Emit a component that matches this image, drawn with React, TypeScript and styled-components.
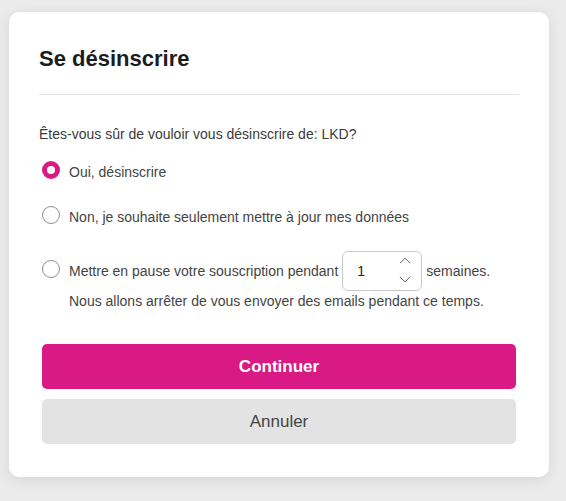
import React, { useState } from "react";
import styled, { createGlobalStyle } from "styled-components";
import { ChevronUp, ChevronDown } from "lucide-react";

const GlobalStyle = createGlobalStyle`
  html, body {
    margin: 0;
    padding: 0;
    background: #ebebeb;
    font-family: "Liberation Sans", Arial, sans-serif;
  }
`;

const Page = styled.div`
  padding: 12px 17px 24px 9px;
`;

const Card = styled.div`
  width: 540px;
  box-sizing: border-box;
  background: #ffffff;
  border-radius: 10px;
  box-shadow: 0 3px 14px rgba(0, 0, 0, 0.09);
  padding: 34px 30px 33px;
`;

const Title = styled.h2`
  margin: 0;
  font-size: 22px;
  font-weight: 700;
  color: #1c1c1c;
`;

const Divider = styled.hr`
  margin: 22px 0 0;
  border: none;
  border-top: 1px solid #e2e2e2;
`;

const Question = styled.p`
  margin: 29px 0 0;
  font-size: 14px;
  line-height: 20px;
  color: #3a3a3a;
`;

const Options = styled.div`
  display: flex;
  flex-direction: column;
  gap: 24px;
  margin: 17px 3px 0;
`;

const Option = styled.label`
  display: flex;
  align-items: flex-start;
  gap: 9px;
  cursor: pointer;
`;

const Radio = styled.span<{ $checked: boolean; $offset?: number }>`
  flex: none;
  box-sizing: border-box;
  width: 18px;
  height: 18px;
  border-radius: 50%;
  margin-top: ${({ $offset }) => $offset ?? 0}px;
  border: ${({ $checked }) => ($checked ? "5px solid #d91a84" : "1px solid #8f8f8f")};
  background: #ffffff;
`;

const Label = styled.span<{ $tight?: boolean }>`
  font-size: 14px;
  line-height: 20px;
  color: #444444;
  padding-top: ${({ $tight }) => ($tight ? 0 : 1)}px;
`;

const PauseBody = styled.div`
  display: flex;
  flex-direction: column;
`;

const PauseLine = styled.div`
  display: flex;
  align-items: center;
  gap: 4px;
  font-size: 14px;
  color: #444444;
`;

const NumberBox = styled.div`
  position: relative;
  width: 80px;
  height: 40px;
  box-sizing: border-box;
  border: 1px solid #c9c9c9;
  border-radius: 6px;
  display: flex;
  align-items: center;
  padding-left: 14px;
  font-size: 14px;
  color: #222222;
`;

const Spinner = styled.div`
  position: absolute;
  right: 6px;
  top: -1px;
  bottom: 1px;
  display: flex;
  flex-direction: column;
  justify-content: space-between;
  color: #5f5f5f;
`;

const Buttons = styled.div`
  display: flex;
  flex-direction: column;
  gap: 10px;
  margin: 33px 3px 0;
`;

const Button = styled.button<{ $primary?: boolean }>`
  height: 45px;
  border: none;
  border-radius: 5px;
  font-family: "Liberation Sans", Arial, sans-serif;
  font-size: 17px;
  font-weight: ${({ $primary }) => ($primary ? 700 : 400)};
  color: ${({ $primary }) => ($primary ? "#ffffff" : "#444444")};
  background: ${({ $primary }) => ($primary ? "#d91a84" : "#e3e3e3")};
  cursor: pointer;
`;

const App: React.FC = () => {
  const [choice, setChoice] = useState("yes");
  const [weeks] = useState(1);

  return (
    <>
      <GlobalStyle />
      <Page>
        <Card>
          <Title>Se désinscrire</Title>
          <Divider />
          <Question>Êtes-vous sûr de vouloir vous désinscrire de: LKD?</Question>
          <Options>
            <Option onClick={() => setChoice("yes")}>
              <Radio $checked={choice === "yes"} />
              <Label>Oui, désinscrire</Label>
            </Option>
            <Option onClick={() => setChoice("update")}>
              <Radio $checked={choice === "update"} />
              <Label>Non, je souhaite seulement mettre à jour mes données</Label>
            </Option>
            <Option onClick={() => setChoice("pause")}>
              <Radio $checked={choice === "pause"} $offset={9} />
              <PauseBody>
                <PauseLine>
                  Mettre en pause votre souscription pendant
                  <NumberBox>
                    {weeks}
                    <Spinner>
                      <ChevronUp size={20} strokeWidth={1.2} />
                      <ChevronDown size={20} strokeWidth={1.2} />
                    </Spinner>
                  </NumberBox>
                  semaines.
                </PauseLine>
                <Label $tight>Nous allons arrêter de vous envoyer des emails pendant ce temps.</Label>
              </PauseBody>
            </Option>
          </Options>
          <Buttons>
            <Button $primary>Continuer</Button>
            <Button>Annuler</Button>
          </Buttons>
        </Card>
      </Page>
    </>
  );
};

export default App;
